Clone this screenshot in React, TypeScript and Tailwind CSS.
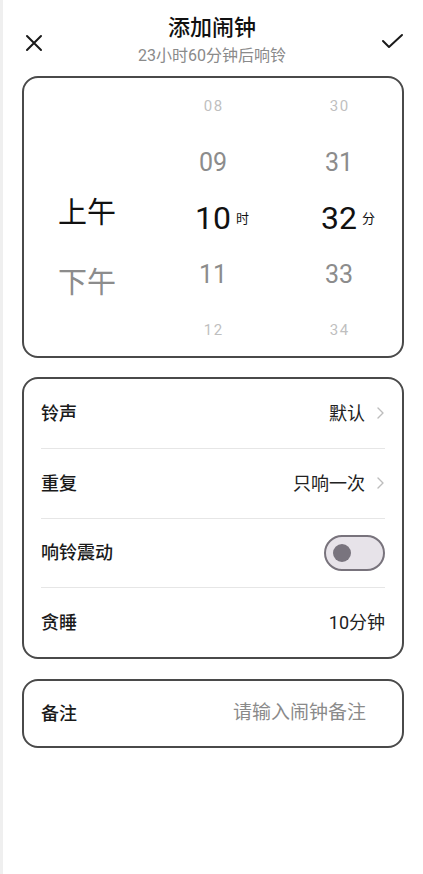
import React from "react";

const font = { fontFamily: 'Roboto, "Noto Sans CJK SC", "Noto Sans", sans-serif' };

function Chevron() {
  return (
    <svg width="9" height="12" viewBox="0 0 9 12" className="ml-[11px]">
      <polyline points="2,1 7,6 2,11" fill="none" stroke="#bdbdbd" strokeWidth="1.4" strokeLinecap="round" strokeLinejoin="round" />
    </svg>
  );
}

function NumCol({ items, unit }: { items: string[]; unit: string }) {
  const styles = [
    "text-[15px] text-[#bfbfbf] tracking-[1.5px] pl-[1.5px]",
    "text-[25px] text-[#8c8c8c]",
    "text-[32px] text-[#111]",
    "text-[25px] text-[#8c8c8c]",
    "text-[15px] text-[#bfbfbf] tracking-[1.5px] pl-[1.5px]",
  ];
  return (
    <div className="flex flex-col items-center justify-center">
      {items.map((t, i) => (
        <div key={t} className="h-[56px] flex items-center justify-center shrink-0">
          <span className={`relative leading-none ${styles[i]}`}>
            {t}
            {i === 2 && (
              <span className="absolute left-full top-1/2 -translate-y-1/2 ml-[5px] text-[13px] text-[#111] whitespace-nowrap">
                {unit}
              </span>
            )}
          </span>
        </div>
      ))}
    </div>
  );
}

export default function App() {
  return (
    <div className="flex min-h-[874px] bg-white" style={font}>
      <div className="w-[3px] bg-[#efefef] shrink-0" />
      <div className="flex-1 px-[19px]">
        {/* header */}
        <div className="flex h-[76px] items-start">
          <div className="mt-[34px] ml-[3px] w-[18px] h-[18px]">
            <svg width="18" height="18" viewBox="0 0 18 18">
              <path d="M2 2 L16 16 M16 2 L2 16" stroke="#1a1a1a" strokeWidth="2" strokeLinecap="round" />
            </svg>
          </div>
          <div className="flex-1 flex flex-col items-center pt-[15px]">
            <div className="text-[22px] leading-[26px] font-medium text-[#111]">添加闹钟</div>
            <div className="mt-[5px] text-[16px] leading-[20px] text-[#8a8a8a]">23小时60分钟后响铃</div>
          </div>
          <div className="mt-[33px] w-[23px] h-[17px]">
            <svg width="23" height="17" viewBox="0 0 23 17">
              <path d="M2 8 L8 14 L21 2" fill="none" stroke="#1a1a1a" strokeWidth="2" strokeLinecap="round" strokeLinejoin="round" />
            </svg>
          </div>
        </div>

        {/* time picker */}
        <div className="h-[282px] rounded-[16px] border-2 border-[#4a4a4a] grid grid-cols-3 overflow-hidden">
          <div className="flex flex-col items-center pt-[118px]">
            <div className="h-[70px] flex items-start text-[29px] leading-[34px] text-[#111]">上午</div>
            <div className="h-[70px] flex items-start text-[29px] leading-[34px] text-[#8c8c8c]">下午</div>
          </div>
          <NumCol items={["08", "09", "10", "11", "12"]} unit="时" />
          <NumCol items={["30", "31", "32", "33", "34"]} unit="分" />
        </div>

        {/* settings */}
        <div className="mt-[19px] h-[282px] rounded-[16px] border-2 border-[#4a4a4a] px-[17px] flex flex-col">
          <div className="h-[70px] flex items-center justify-between">
            <span className="text-[18px] font-medium text-[#1a1a1a]">铃声</span>
            <span className="flex items-center text-[18px] text-[#222]">默认<Chevron /></span>
          </div>
          <div className="h-px bg-[#e6e6e6]" />
          <div className="h-[70px] flex items-center justify-between">
            <span className="text-[18px] font-medium text-[#1a1a1a]">重复</span>
            <span className="flex items-center text-[18px] text-[#222]">只响一次<Chevron /></span>
          </div>
          <div className="h-px bg-[#e6e6e6]" />
          <div className="h-[70px] flex items-center justify-between">
            <span className="text-[18px] font-medium text-[#1a1a1a]">响铃震动</span>
            <div className="w-[61px] h-[36px] rounded-full border-2 border-[#78737c] bg-[#e7e3e9] flex items-center pl-[7px]">
              <div className="w-[18px] h-[18px] rounded-full bg-[#79747e]" />
            </div>
          </div>
          <div className="h-px bg-[#e6e6e6]" />
          <div className="h-[70px] flex items-center justify-between">
            <span className="text-[18px] font-medium text-[#1a1a1a]">贪睡</span>
            <span className="text-[18px] text-[#222]">10分钟</span>
          </div>
        </div>

        {/* note */}
        <div className="mt-[20px] h-[69px] rounded-[16px] border-2 border-[#4a4a4a] pl-[17px] pr-[36px] flex items-center justify-between">
          <span className="text-[18px] font-medium text-[#1a1a1a]">备注</span>
          <span className="text-[19px] text-[#8a8a8a]">请输入闹钟备注</span>
        </div>
      </div>
    </div>
  );
}
